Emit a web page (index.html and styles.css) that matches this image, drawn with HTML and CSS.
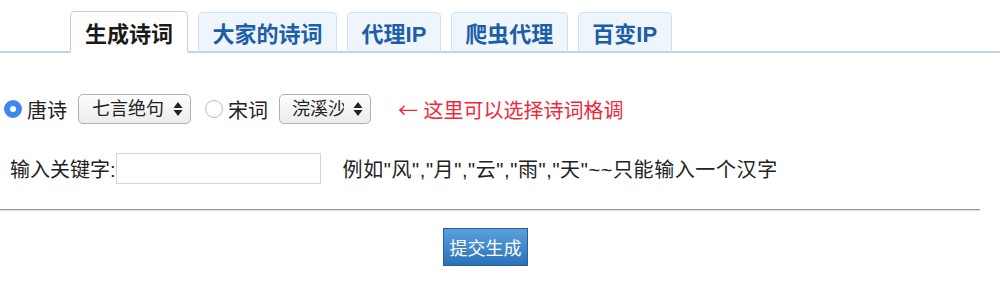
FILE: index.html
```html
<!DOCTYPE html>
<html lang="zh-CN">
<head>
  <meta charset="UTF-8">
  <title>生成诗词</title>
  <link rel="stylesheet" href="styles.css">
</head>
<body>
  <!-- Top tabs -->
  <div class="tabs">
    <a class="tab active" href="#">生成诗词</a>
    <a class="tab" href="#">大家的诗词</a>
    <a class="tab" href="#">代理IP</a>
    <a class="tab" href="#">爬虫代理</a>
    <a class="tab" href="#">百变IP</a>
  </div>

  <form class="poem-form">
    <!-- Poem type -->
    <div class="row type-row">
      <label class="radio-label">
        <input type="radio" name="type" value="tang" checked>
        <span>唐诗</span>
      </label>
      <span class="select-wrap">
        <select class="fake-select">
          <option>七言绝句</option>
          <option>五言绝句</option>
        </select>
        <svg class="select-arrows" width="10" height="16" viewBox="0 0 10 16">
          <path d="M5 1 L9.5 7 L0.5 7 Z" fill="#222"/>
          <path d="M5 15 L9.5 9 L0.5 9 Z" fill="#222"/>
        </svg>
      </span>
      <label class="radio-label">
        <input type="radio" name="type" value="song">
        <span>宋词</span>
      </label>
      <span class="select-wrap">
        <select class="fake-select small">
          <option>浣溪沙</option>
          <option>水调歌头</option>
        </select>
        <svg class="select-arrows" width="10" height="16" viewBox="0 0 10 16">
          <path d="M5 1 L9.5 7 L0.5 7 Z" fill="#222"/>
          <path d="M5 15 L9.5 9 L0.5 9 Z" fill="#222"/>
        </svg>
      </span>
      <span class="hint"><span class="arrow">&larr;</span> 这里可以选择诗词格调</span>
    </div>

    <!-- Keyword -->
    <div class="row keyword-row">
      <label for="keyword">输入关键字:</label>
      <input type="text" id="keyword" class="keyword-input">
      <span class="example">例如"风","月","云","雨","天"~~只能输入一个汉字</span>
    </div>

    <hr class="divider">

    <div class="submit-row">
      <button type="button" class="submit-btn">提交生成</button>
    </div>
  </form>
</body>
</html>
```

FILE: styles.css
```css
body {
  margin: 0;
  padding: 0;
  background: #fff;
  color: #222;
  font-family: "Liberation Sans", "Noto Sans CJK SC", sans-serif;
  font-size: 20px;
}

/* Tabs */
.tabs {
  display: flex;
  align-items: flex-end;
  gap: 10px;
  padding-left: 70px;
  margin-top: 11px;
  height: 40px;
  border-bottom: 2px solid #bcd6ec;
}
.tab {
  display: flex;
  align-items: center;
  height: 38px;
  padding: 0 13.5px;
  margin-bottom: -2px;
  background: #eef5fc;
  border: 1px solid #cfe1f1;
  border-bottom: 2px solid #bcd6ec;
  border-radius: 5px 5px 0 0;
  color: #1d5ea8;
  font-size: 22px;
  font-weight: bold;
  text-decoration: none;
}
.tab.active {
  height: 39px;
  padding: 0 14px;
  background: #fff;
  color: #1a1a1a;
  border-color: #b7d2ea;
  border-bottom: 2px solid #fff;
}

/* Form */
.poem-form {
  margin: 0;
}
.row {
  display: flex;
  align-items: center;
}
.type-row {
  margin-top: 41px;
  height: 30px;
}
.radio-label {
  display: flex;
  align-items: center;
}
.radio-label input {
  appearance: none;
  width: 18px;
  height: 18px;
  margin: 0 5px 0 4px;
  border: 1px solid #bbb;
  border-radius: 50%;
  background: #fff;
  box-sizing: border-box;
}
.radio-label input:checked {
  border: 6px solid #3f86f0;
  background: #fff;
}
.select-wrap {
  position: relative;
  display: inline-block;
  margin: 0 10px 0 11px;
}
.fake-select {
  appearance: none;
  height: 30px;
  width: 113px;
  padding: 0 26px 0 13px;
  border: 1px solid #b0b0b0;
  border-radius: 5px;
  background: linear-gradient(#fdfdfd, #ececec);
  font-family: inherit;
  font-size: 18px;
  color: #222;
}
.fake-select.small {
  width: 92px;
  padding-left: 12px;
}
.select-arrows {
  position: absolute;
  right: 8px;
  top: 7px;
  pointer-events: none;
}
.hint {
  margin-left: 17px;
  color: #f2263a;
}
.hint .arrow {
  font-family: "Noto Sans CJK SC", sans-serif;
}

.keyword-row {
  margin-top: 29px;
  height: 31px;
  padding-left: 10px;
}
.keyword-input {
  width: 205px;
  height: 31px;
  box-sizing: border-box;
  margin: 0 22px 0 0;
  border: 1px solid #d4d4d4;
  padding: 2px 4px;
  font-size: 18px;
}
.example {
  letter-spacing: 0.6px;
}

.divider {
  width: 980px;
  margin: 25px 0 0 0;
  border: 0;
  border-top: 1px solid #9a9a9a;
  border-bottom: 1px solid #dcdcdc;
  height: 0;
}

.submit-row {
  display: flex;
  justify-content: center;
  margin-top: 17px;
  padding-right: 29px;
}
.submit-btn {
  height: 38px;
  width: 85px;
  padding: 0;
  border: 1px solid #2b5f98;
  background: linear-gradient(#5aa0dc, #2c70ba);
  color: #fff;
  font-family: inherit;
  font-size: 18px;
}
```
